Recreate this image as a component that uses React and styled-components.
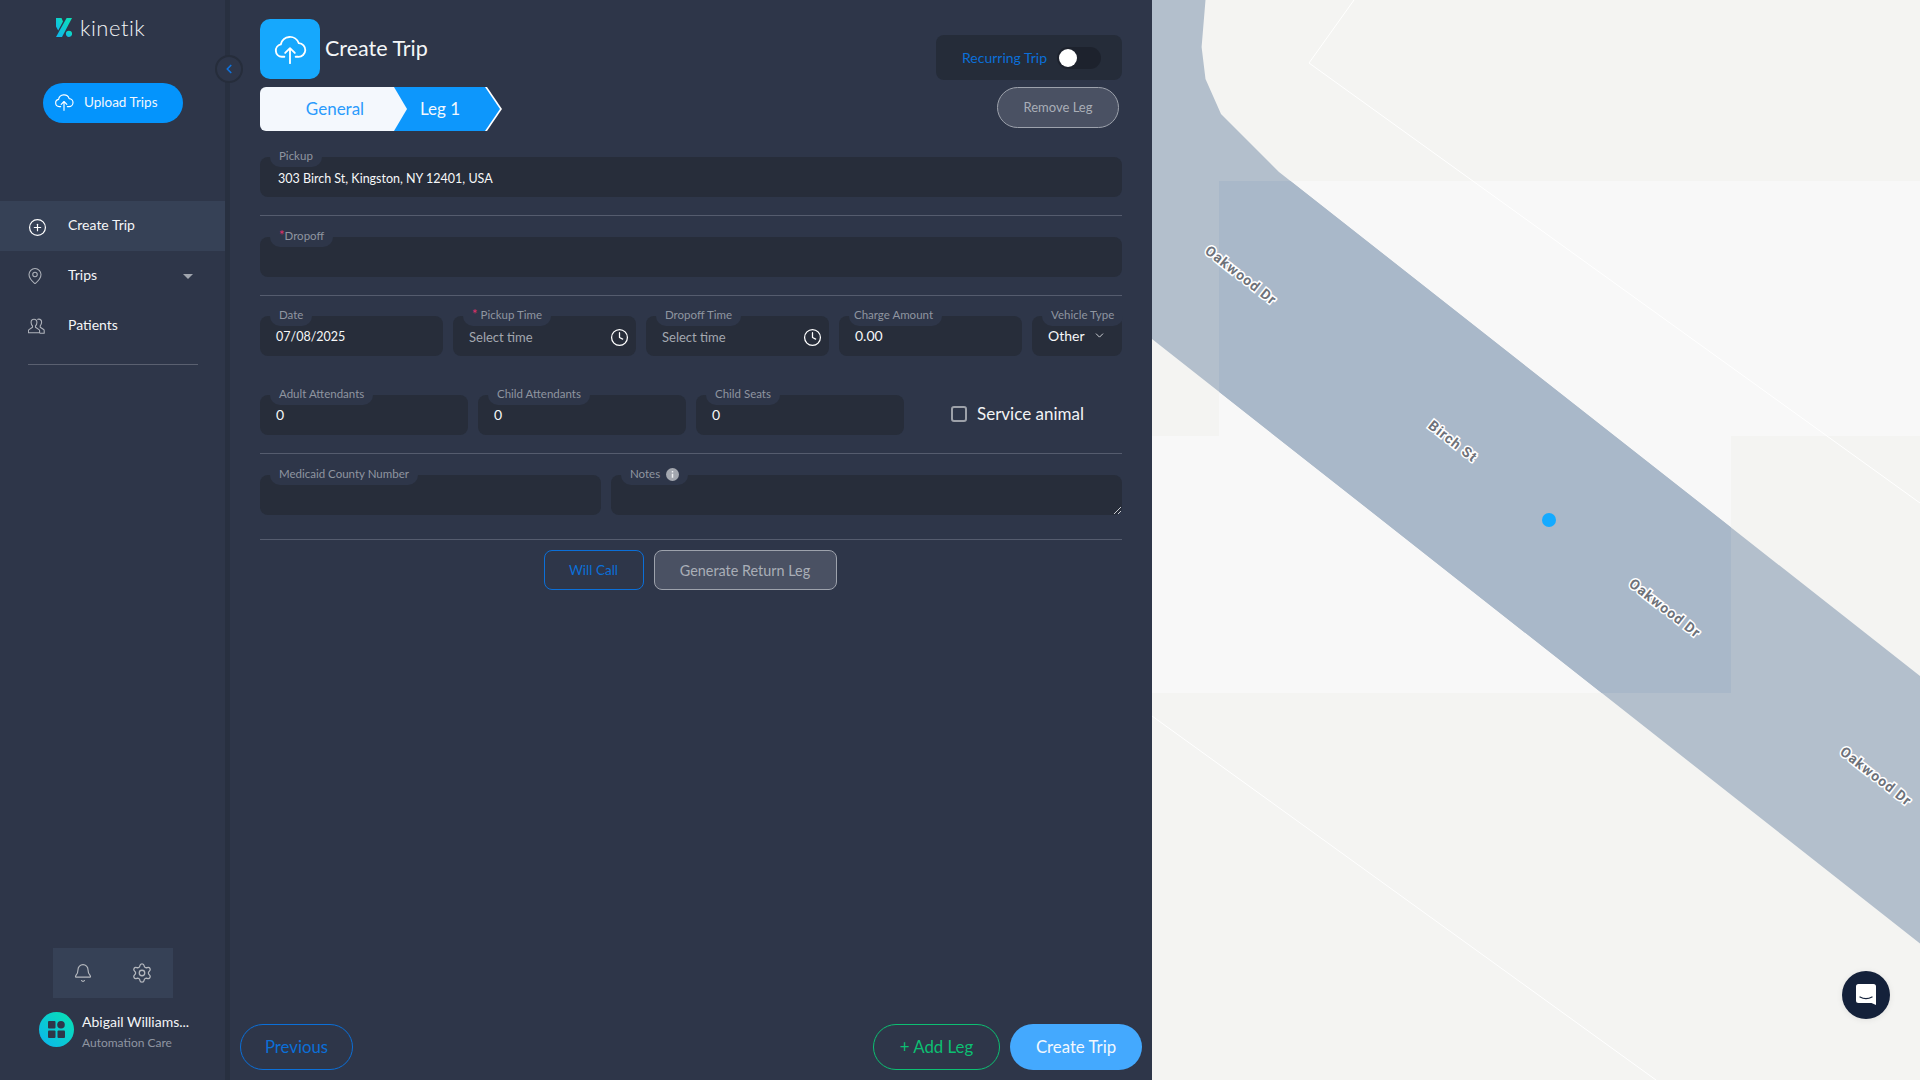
import React from "react";
import styled, { createGlobalStyle } from "styled-components";
import { ChevronLeft, ChevronDown, Bell, Settings, MapPin, CirclePlus, Clock } from "lucide-react";

const GlobalStyle = createGlobalStyle`
    html, body {
        margin: 0;
        padding: 0;
        background: #2e3649;
    }

    * {
        box-sizing: border-box;
    }

    body {
        font-family: Lato, "Open Sans", sans-serif;
        color: #fff;
    }
`

const Page = styled.div`
    display: flex;
    width: 1920px;
    height: 1080px;
    overflow: hidden;
`

const Sidebar = styled.aside`
    position: relative;
    display: flex;
    flex-direction: column;
    flex: 0 0 230px;
    height: 100%;
    background: #2e3649;
    border-right: 5px solid #283040;
`

const LogoRow = styled.div`
    display: flex;
    align-items: center;
    gap: 8px;
    height: 19px;
    margin: 18px 0 0 56px;
`

const LogoText = styled.span`
    font-size: 22px;
    font-weight: 300;
    letter-spacing: 0.5px;
    line-height: 19px;
    color: #f2f4f6;
`

const CollapseButton = styled.button`
    position: absolute;
    top: 55px;
    left: 215px;
    display: flex;
    align-items: center;
    justify-content: center;
    width: 28px;
    height: 28px;
    padding: 0;
    background: #2e3649;
    border: 2px solid #262d3b;
    border-radius: 50%;
    color: #0f72dc;
`

const UploadButton = styled.button`
    display: flex;
    align-items: center;
    gap: 10px;
    width: 140px;
    height: 40px;
    margin: 46px 0 0 43px;
    padding: 0 0 3px 11px;
    background: #0494fc;
    border: 0;
    border-radius: 20px;
    font-family: inherit;
    font-size: 13.5px;
    color: #f2f7fd;
`

const Nav = styled.nav`
    display: flex;
    flex-direction: column;
    margin-top: 78px;
`

const NavItem = styled.div`
    display: flex;
    align-items: center;
    height: 50px;
    padding-left: 28px;
    background: ${props => props.$active ? "#364156" : "transparent"};
    color: ${props => props.$active ? "#fff" : "#aeb2ba"};
    font-size: 14px;
`

const NavIcon = styled.span`
    display: flex;
    align-items: center;
    justify-content: center;
    width: 26px;
    margin-right: 14px;
    padding-right: ${props => 6 + (props.$shift || 0)}px;
    padding-top: ${props => props.$down || 0}px;

    svg {
        flex: none;
    }
`

const NavLabel = styled.span`
    color: #f4f5f7;
    margin-top: -4px;
`

const Caret = styled.span`
    width: 0;
    height: 0;
    margin-left: auto;
    margin-right: 32px;
    border-left: 5px solid transparent;
    border-right: 5px solid transparent;
    border-top: 5px solid #a0a5ae;
`

const NavDivider = styled.hr`
    width: 170px;
    height: 1px;
    margin: 13px 0 0 28px;
    background: #5a6070;
    border: 0;
`

const SidebarBottom = styled.div`
    display: flex;
    flex-direction: column;
    margin-top: auto;
    padding-bottom: 33px;
`

const IconBox = styled.div`
    display: flex;
    align-items: center;
    justify-content: space-around;
    width: 120px;
    height: 50px;
    margin-left: 53px;
    padding: 0 1px;
    background: #364156;
    color: #b5b8be;
`

const UserRow = styled.div`
    display: flex;
    align-items: center;
    gap: 8px;
    height: 35px;
    margin: 14px 0 0 39px;
`

const UserText = styled.div`
    padding-top: 5px;
`

const Avatar = styled.div`
    display: flex;
    align-items: center;
    justify-content: center;
    width: 35px;
    height: 35px;
    border-radius: 50%;
    background: linear-gradient(45deg, #0bb4f0, #08e3b0);
`

const UserName = styled.div`
    font-size: 14px;
    line-height: 20px;
    color: #f4f5f7;
`

const UserOrg = styled.div`
    margin-top: 2px;
    font-size: 12px;
    line-height: 18px;
    color: #8f95a1;
`

const Main = styled.main`
    display: flex;
    flex-direction: column;
    flex: 0 0 922px;
    height: 100%;
    padding: 19px 10px 10px;
    background: #2e3649;
`

const Form = styled.div`
    display: flex;
    flex-direction: column;
    padding: 0 20px;
`

const HeaderRow = styled.div`
    display: flex;
    justify-content: space-between;
    height: 60px;
`

const TitleGroup = styled.div`
    display: flex;
    align-items: center;
    gap: 5px;
`

const TitleIcon = styled.div`
    display: flex;
    align-items: center;
    justify-content: center;
    width: 60px;
    height: 60px;
    background: #16a8fd;
    border-radius: 10px;
`

const Title = styled.h1`
    margin: -3px 0 0;
    font-size: 21.5px;
    font-weight: 400;
    color: #f4f6f8;
`

const RecurringBox = styled.div`
    display: flex;
    align-items: center;
    gap: 10px;
    width: 186px;
    height: 45px;
    margin-top: 16px;
    padding-left: 26px;
    background: #252c39;
    border-radius: 8px;
    font-size: 14px;
    color: #0b6fd8;
`

const Toggle = styled.span`
    display: flex;
    align-items: center;
    width: 44px;
    height: 22px;
    padding-left: 2px;
    background: #1d222d;
    border-radius: 11px;
`

const Knob = styled.span`
    width: 18px;
    height: 18px;
    background: #fff;
    border-radius: 50%;
`

const TabRow = styled.div`
    display: flex;
    justify-content: space-between;
    margin-top: 8px;
`

const Tabs = styled.div`
    display: flex;
    height: 44px;
`

const GeneralTab = styled.div`
    position: relative;
    z-index: 1;
    display: flex;
    align-items: center;
    justify-content: center;
    width: 147px;
    padding: 0 0 2px 3px;
    background: #f4f8fd;
    border-radius: 6px 0 0 6px;
    clip-path: polygon(0 0, 134px 0, 147px 50%, 134px 100%, 0 100%);
    font-size: 17px;
    color: #2a9bfc;
`

const LegTab = styled.div`
    position: relative;
    display: flex;
    align-items: center;
    justify-content: center;
    width: 108px;
    margin-left: -13px;
    padding: 0 16px 2px 0;
    background: #fff;
    clip-path: polygon(0 0, 93px 0, 108px 50%, 93px 100%, 0 100%);
    font-size: 17px;
    color: #f2f7fd;

    &::before {
        content: "";
        position: absolute;
        inset: 0;
        background: #0d97fc;
        clip-path: polygon(0 0, 91px 0, 106px 50%, 91px 100%, 0 100%);
    }

    span {
        position: relative;
    }
`

const RemoveButton = styled.button`
    width: 122px;
    height: 41px;
    margin-right: 3px;
    padding-bottom: 2px;
    background: #4a5163;
    border: 1px solid #9da2ac;
    border-radius: 21px;
    font-family: inherit;
    font-size: 13px;
    color: #a9aeb7;
`

const FieldRow = styled.div`
    display: grid;
    grid-template-columns: ${props => props.$columns || "1fr"};
    gap: 10px;
    margin-top: ${props => props.$top || 0}px;
`

const FieldBox = styled.div`
    position: relative;
    display: flex;
    align-items: center;
    justify-content: space-between;
    height: 40px;
    padding: ${props => props.$pad || "0 13px 2px 16px"};
    background: #272d3a;
    border-radius: 8px;
    font-size: ${props => props.$size || 14}px;
    color: ${props => props.$muted ? "#a3a7af" : "#f6f7f8"};
`

const Chip = styled.label`
    position: absolute;
    top: -11px;
    left: 10px;
    display: flex;
    align-items: center;
    height: 21px;
    padding: 0 9px 2px ${props => props.$pad || 9}px;
    background: #2e3649;
    border-radius: 0 0 10px 10px;
    font-size: 11.5px;
    white-space: nowrap;
    color: #8f95a0;
`

const Required = styled.span`
    margin-right: ${props => props.$gap || 0}px;
    font-size: 13px;
    line-height: 13px;
    color: #e0316b;
`

const InfoDot = styled.svg`
    margin: 2px 0 0 6px;
`

const Divider = styled.hr`
    width: 100%;
    height: 1px;
    margin: ${props => props.$top || 18}px 0 ${props => props.$bottom || 21}px;
    background: #555c6e;
    border: 0;
`

const ServiceAnimal = styled.div`
    display: flex;
    align-items: center;
    gap: 10px;
    margin-left: 37px;
    padding-bottom: 4px;
    font-size: 17px;
    color: #f2f3f5;
`

const Checkbox = styled.span`
    width: 16px;
    height: 16px;
    margin-top: 2px;
    border: 2px solid #9da1a9;
    border-radius: 3px;
`

const ResizeGrip = styled.svg`
    position: absolute;
    right: 1px;
    bottom: 1px;
`

const ActionRow = styled.div`
    display: flex;
    justify-content: center;
    gap: 10px;
    padding-right: 2px;
`

const ActionButton = styled.button`
    width: ${props => props.$width}px;
    height: 40px;
    background: ${props => props.$grey ? "#4a5163" : "transparent"};
    border: 1px solid ${props => props.$grey ? "#9da2ac" : "#0b6fd8"};
    border-radius: 8px;
    font-family: inherit;
    font-size: ${props => props.$grey ? 14.4 : 13.5}px;
    color: ${props => props.$grey ? "#a9aeb7" : "#0b6fd8"};
`

const Footer = styled.div`
    display: flex;
    align-items: center;
    gap: 10px;
    margin-top: auto;
`

const PillButton = styled.button`
    width: ${props => props.$width}px;
    height: 46px;
    margin-left: ${props => props.$push ? "auto" : 0};
    padding-bottom: 3px;
    background: ${props => props.$fill || "transparent"};
    border: ${props => props.$fill ? "0" : `1px solid ${props.$color}`};
    border-radius: 23px;
    font-family: inherit;
    font-size: 16.8px;
    color: ${props => props.$color};
`

const MapPanel = styled.section`
    position: relative;
    flex: 1;
    height: 100%;
    overflow: hidden;
    background: #f4f4f2;
`

const MapCanvas = styled.svg`
    display: block;
    width: 768px;
    height: 1080px;
`

const RoadLabel = styled.text`
    font-family: Roboto, "Liberation Sans", sans-serif;
    font-size: 14px;
    font-weight: 700;
    letter-spacing: 1px;
    fill: #6d7179;
    stroke: #fff;
    stroke-width: 3px;
    paint-order: stroke;
    text-anchor: middle;
`

const ChatBubble = styled.button`
    position: absolute;
    top: 971px;
    left: 690px;
    display: flex;
    align-items: center;
    justify-content: center;
    width: 48px;
    height: 48px;
    padding: 0;
    background: #14213a;
    border: 0;
    border-radius: 50%;
    box-shadow: 0 1px 6px rgba(0, 0, 0, 0.08);
`

function CloudIcon({ size, width = 1.6 }) {
    return <svg width={size} height={size} viewBox="0 0 24 24" fill="none" stroke="#fff" strokeWidth={width} strokeLinecap="round" strokeLinejoin="round">
        <path d="M8 17.5H6.2a4.4 4.4 0 0 1-.7-8.7 6.6 6.6 0 0 1 12.7-.9 4.8 4.8 0 0 1-.4 9.6H16" />
        <path d="M12 22V11.5M8.6 14.8 12 11.4l3.4 3.4" />
    </svg>;
}

function LogoMark() {
    return <svg width="16" height="19" viewBox="0 0 16 19">
        <defs>
            <linearGradient id="logoGrad" x1="0" y1="1" x2="1" y2="0">
                <stop offset="0" stopColor="#0fb6ef" />
                <stop offset="1" stopColor="#0de2b4" />
            </linearGradient>
        </defs>
        <path fill="url(#logoGrad)" d="M0 0h5.5L7 3.4 4.6 8 2.2 12.6 0 8.5z" />
        <path fill="url(#logoGrad)" d="M10.6 0H16L6 19H0z" />
        <circle cx="13" cy="15.8" r="3.1" fill="url(#logoGrad)" />
    </svg>;
}

function PatientsIcon() {
    return <svg width="17" height="16" viewBox="0 0 17 16" fill="none" stroke="#aeb2ba" strokeWidth="1.1" strokeLinejoin="round">
        <path d="M6 1.2c-1.8 0-2.9 1.4-2.9 3.2 0 1.5.6 2.6 1.4 3.5v1.4L1 11.6c-.5.3-.6.7-.6 1.2v2h11.2v-2c0-.5-.2-.9-.6-1.2L7.5 9.3V7.900c.8-.9 1.400-2 1.400-3.500C8.900 2.600 7.800 1.200 6 1.200z" />
        <path d="M9.300 1.400c.4-.2.9-.3 1.400-.3 1.800 0 2.900 1.400 2.900 3.200 0 1.500-.6 2.600-1.400 3.500v1.400l3.500 2.300c.4.3.5.7.5 1.200v2.600h-4.500" />
    </svg>;
}

function AvatarGrid() {
    return <svg width="17" height="17" viewBox="0 0 17 17" fill="#2e3649">
        <rect x="0" y="0" width="7.500" height="7.500" rx="1" />
        <circle cx="13" cy="3.800" r="3.800" />
        <rect x="0" y="9.500" width="7.500" height="7.500" rx="1" />
        <rect x="9.500" y="9.500" width="7.500" height="7.500" rx="1" />
    </svg>;
}

function MapDrawing() {
    const road = "M0 -10 L53.500 0 L49.600 47 L53.500 79 L69 114 L127 172 L768 676 L768 943.500 L0 339 Z";
    return <MapCanvas viewBox="0 0 768 1080">
        <defs>
            <clipPath id="tileClip">
                <rect x="67" y="181" width="512" height="512" />
            </clipPath>
        </defs>
        <rect x="0" y="0" width="768" height="1080" fill="#f4f4f2" />
        <rect x="67" y="181" width="701" height="255" fill="#f8f8f8" />
        <rect x="0" y="436" width="579" height="257" fill="#f8f8f8" />
        <path d="M202 0 L157 63 L768 503" fill="none" stroke="#fff" strokeWidth="1" />
        <path d="M0 716 L504 1080" fill="none" stroke="#fff" strokeWidth="1" />
        <path d={road} fill="#b3bfcc" />
        <path d={road} fill="#a9b8c9" clipPath="url(#tileClip)" />
        <RoadLabel transform="translate(86 279) rotate(38)">Oakwood Dr</RoadLabel>
        <RoadLabel transform="translate(298 445) rotate(38)">Birch St</RoadLabel>
        <RoadLabel transform="translate(510 612) rotate(38)">Oakwood Dr</RoadLabel>
        <RoadLabel transform="translate(721 780) rotate(38)">Oakwood Dr</RoadLabel>
        <circle cx="397" cy="520" r="7" fill="#14aaff" />
    </MapCanvas>;
}

function Field({ label, required, starGap, info, chipPad, children, ...rest }) {
    return <FieldBox {...rest}>
        <Chip $pad={chipPad}>
            {required && <Required $gap={starGap}>*</Required>}
            {label}
            {info && <InfoDot width="13" height="13" viewBox="0 0 13 13">
                <circle cx="6.500" cy="6.500" r="6.500" fill="#a3a7af" />
                <path d="M6.500 5.800v4M6.500 3v1.400" stroke="#eef0f2" strokeWidth="1.500" />
            </InfoDot>}
        </Chip>
        {children}
    </FieldBox>;
}

function App() {
    return <Page>
        <GlobalStyle />
        <Sidebar>
            <LogoRow>
                <LogoMark />
                <LogoText>kinetik</LogoText>
            </LogoRow>
            <CollapseButton><ChevronLeft size={14} strokeWidth={3} /></CollapseButton>
            <UploadButton><CloudIcon size={20} width={1.4} />Upload Trips</UploadButton>
            <Nav>
                <NavItem $active>
                    <NavIcon $shift={1} $down={3}><CirclePlus size={19} color="#fff" strokeWidth={1.5} /></NavIcon>
                    <NavLabel>Create Trip</NavLabel>
                </NavItem>
                <NavItem>
                    <NavIcon $shift={6}><MapPin size={18} strokeWidth={1.4} /></NavIcon>
                    <NavLabel>Trips</NavLabel>
                    <Caret />
                </NavItem>
                <NavItem>
                    <NavIcon $shift={3}><PatientsIcon /></NavIcon>
                    <NavLabel>Patients</NavLabel>
                </NavItem>
            </Nav>
            <NavDivider />
            <SidebarBottom>
                <IconBox>
                    <Bell size={20} strokeWidth={1.4} />
                    <Settings size={22} strokeWidth={1.4} />
                </IconBox>
                <UserRow>
                    <Avatar><AvatarGrid /></Avatar>
                    <UserText>
                        <UserName>Abigail Williams...</UserName>
                        <UserOrg>Automation Care</UserOrg>
                    </UserText>
                </UserRow>
            </SidebarBottom>
        </Sidebar>
        <Main>
            <Form>
                <HeaderRow>
                    <TitleGroup>
                        <TitleIcon><CloudIcon size={34} width={1.3} /></TitleIcon>
                        <Title>Create Trip</Title>
                    </TitleGroup>
                    <RecurringBox>
                        Recurring Trip
                        <Toggle><Knob /></Toggle>
                    </RecurringBox>
                </HeaderRow>
                <TabRow>
                    <Tabs>
                        <GeneralTab>General</GeneralTab>
                        <LegTab><span>Leg 1</span></LegTab>
                    </Tabs>
                    <RemoveButton>Remove Leg</RemoveButton>
                </TabRow>

                <FieldRow $top={26}>
                    <Field label="Pickup" $size={12.5} $pad="2px 18px 0 18px">303 Birch St, Kingston, NY 12401, USA</Field>
                </FieldRow>
                <Divider />
                <FieldRow>
                    <Field label="Dropoff" required />
                </FieldRow>
                <Divider $bottom={20} />
                <FieldRow $columns="183px 183px 183px 183px 90px">
                    <Field label="Date" $size={12.5} $pad="0 13px 0 16px">07/08/2025</Field>
                    <Field label="Pickup Time" required starGap={3} $size={13} $muted $pad="2px 7px 0 16px">
                        Select time
                        <Clock size={19} color="#fff" strokeWidth={1.6} />
                    </Field>
                    <Field label="Dropoff Time" $size={13} $muted $pad="2px 7px 0 16px">
                        Select time
                        <Clock size={19} color="#fff" strokeWidth={1.6} />
                    </Field>
                    <Field label="Charge Amount" chipPad={5}>0.00</Field>
                    <Field label="Vehicle Type" $pad="0 16px 2px 16px">
                        Other
                        <ChevronDown size={13} color="#e6e8eb" strokeWidth={1.6} />
                    </Field>
                </FieldRow>
                <FieldRow $columns="208px 208px 208px 1fr" $top={39}>
                    <Field label="Adult Attendants">0</Field>
                    <Field label="Child Attendants">0</Field>
                    <Field label="Child Seats">0</Field>
                    <ServiceAnimal><Checkbox />Service animal</ServiceAnimal>
                </FieldRow>
                <Divider />
                <FieldRow $columns="341px 1fr">
                    <Field label="Medicaid County Number" />
                    <Field label="Notes" info>
                        <ResizeGrip width="7" height="7" viewBox="0 0 7 7" stroke="#c9ccd1" strokeWidth="1">
                            <path d="M0 7 7 0M4 7l3-3" />
                        </ResizeGrip>
                    </Field>
                </FieldRow>
                <Divider $top={24} $bottom={10} />
                <ActionRow>
                    <ActionButton $width={100}>Will Call</ActionButton>
                    <ActionButton $width={183} $grey>Generate Return Leg</ActionButton>
                </ActionRow>
            </Form>
            <Footer>
                <PillButton $width={113} $color="#0b6fd8">Previous</PillButton>
                <PillButton $width={127} $color="#0cbf72" $push>+ Add Leg</PillButton>
                <PillButton $width={132} $color="#f2f7fd" $fill="#44a9fe">Create Trip</PillButton>
            </Footer>
        </Main>
        <MapPanel>
            <MapDrawing />
            <ChatBubble>
                <svg width="22" height="24" viewBox="0 0 22 24">
                    <path fill="#fff" d="M3.500 1h15A2.500 2.500 0 0 1 21 3.500V22l-4.500-2h-13A2.500 2.500 0 0 1 1 17.500v-14A2.500 2.500 0 0 1 3.500 1z" />
                    <path fill="none" stroke="#14213a" strokeWidth="1.300" strokeLinecap="round" d="M5 14c3.500 2 8.500 2 12 0" />
                </svg>
            </ChatBubble>
        </MapPanel>
    </Page>;
}

export default App;
